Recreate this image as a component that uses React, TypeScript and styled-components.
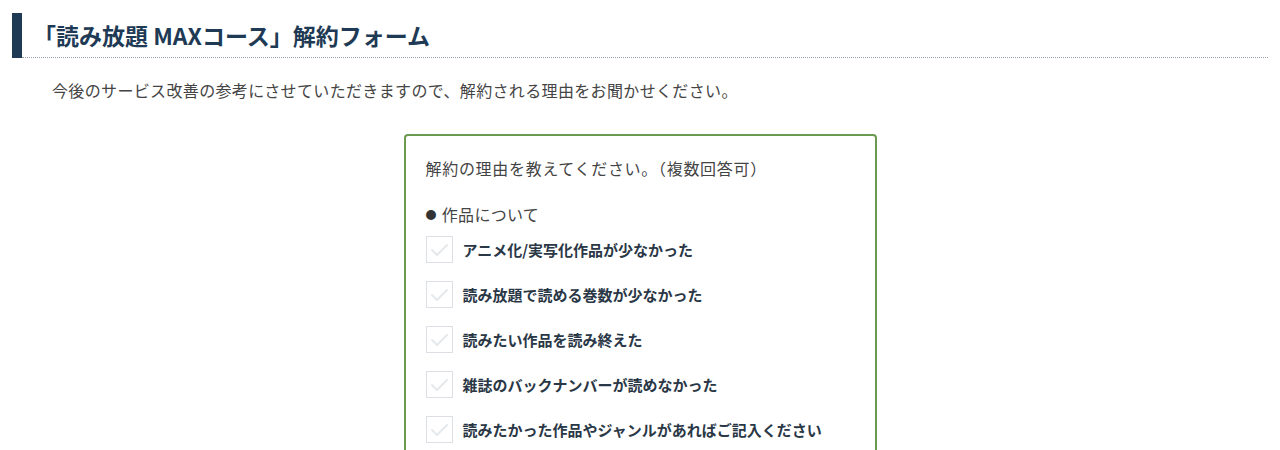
import React from 'react';
import styled, { createGlobalStyle } from 'styled-components';

const GlobalStyle = createGlobalStyle`
  body {
    margin: 0;
    background: #ffffff;
    font-family: "Noto Sans CJK JP", "Noto Sans", sans-serif;
  }
`;

const Page = styled.div`
  padding: 13px 12px 0 12px;
`;

const Heading = styled.div`
  display: flex;
  height: 45px;
`;

const HeadingBar = styled.div`
  width: 10px;
  background: #1e3a55;
`;

const HeadingText = styled.h2`
  flex: 1;
  margin: 0;
  padding-left: 11px;
  display: flex;
  align-items: center;
  font-size: 23px;
  font-weight: 700;
  color: #1e3a55;
  border-bottom: 1px dotted #9aa3ad;
`;

const Lead = styled.p`
  margin: 20px 0 0 40px;
  font-size: 16px;
  line-height: 24px;
  letter-spacing: 0.35px;
  color: #444;
`;

const FormBox = styled.div`
  width: 429px;
  margin: 32px auto 0;
  border: 2px solid #6a9a50;
  border-radius: 4px;
  padding: 20px 20px 10px;
`;

const Question = styled.div`
  font-size: 16px;
  line-height: 24px;
  letter-spacing: 0.7px;
  color: #444;
`;

const Category = styled.div`
  margin-top: 22px;
  display: flex;
  align-items: center;
  gap: 5px;
  font-size: 16px;
  line-height: 24px;
  letter-spacing: 0.3px;
  color: #444;
`;

const Bullet = styled.span`
  font-size: 11px;
  color: #333;
`;

const OptionList = styled.div`
  display: flex;
  flex-direction: column;
  gap: 18px;
  margin-top: 10px;
`;

const Option = styled.label`
  display: flex;
  align-items: center;
  gap: 10px;
  cursor: pointer;
`;

const CheckBox = styled.span`
  width: 27px;
  height: 27px;
  box-sizing: border-box;
  border: 1px solid #dcdfe3;
  display: flex;
  align-items: center;
  justify-content: center;
  background: #fff;
`;

const OptionText = styled.span`
  font-size: 15px;
  font-weight: 700;
  color: #2a3746;
`;

const reasons = [
  'アニメ化/実写化作品が少なかった',
  '読み放題で読める巻数が少なかった',
  '読みたい作品を読み終えた',
  '雑誌のバックナンバーが読めなかった',
  '読みたかった作品やジャンルがあればご記入ください',
];

function Check() {
  return (
    <svg width="19" height="15" viewBox="0 0 19 15">
      <polyline
        points="2,8 7,13 17,3"
        fill="none"
        stroke="#e6e9ec"
        strokeWidth="2"
        strokeLinecap="round"
        strokeLinejoin="round"
      />
    </svg>
  );
}

export default function App() {
  return (
    <Page>
      <GlobalStyle />
      <Heading>
        <HeadingBar />
        <HeadingText>「読み放題 MAXコース」解約フォーム</HeadingText>
      </Heading>
      <Lead>今後のサービス改善の参考にさせていただきますので、解約される理由をお聞かせください。</Lead>
      <FormBox>
        <Question>解約の理由を教えてください。（複数回答可）</Question>
        <Category>
          <Bullet>●</Bullet>作品について
        </Category>
        <OptionList>
          {reasons.map((r) => (
            <Option key={r}>
              <CheckBox>
                <Check />
              </CheckBox>
              <OptionText>{r}</OptionText>
            </Option>
          ))}
        </OptionList>
      </FormBox>
    </Page>
  );
}
